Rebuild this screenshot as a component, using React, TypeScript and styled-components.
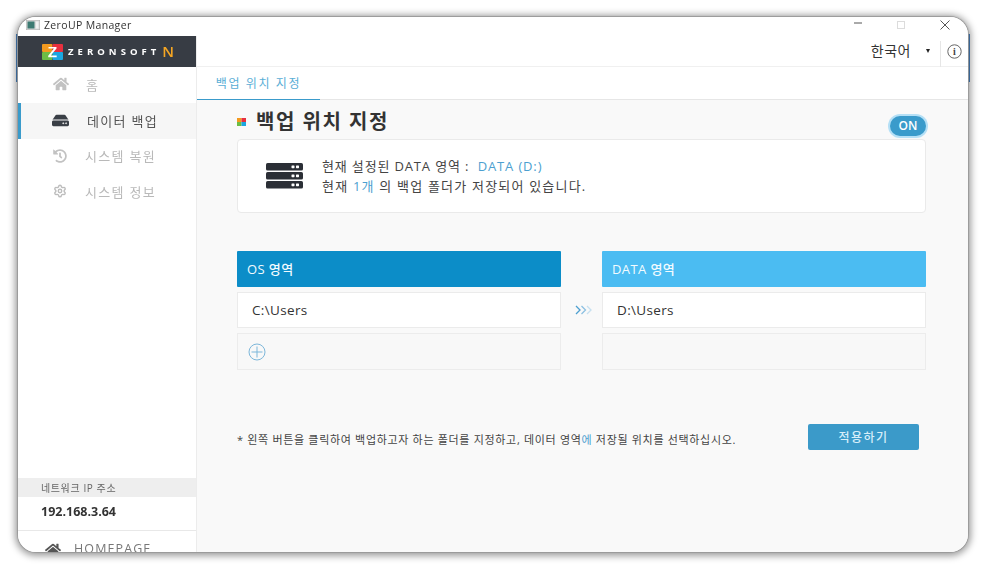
import React from "react";
import styled, { createGlobalStyle } from "styled-components";
import { FaHome, FaHdd, FaHistory } from "react-icons/fa";
import { Settings } from "lucide-react";

const FONT = `"Open Sans", "Noto Sans CJK KR", sans-serif`;

const Global = createGlobalStyle`
  html, body { margin: 0; padding: 0; background: #fff; }
  body { width: 986px; height: 568px; overflow: hidden; font-family: ${FONT}; }
  * { box-sizing: border-box; }
`;

const Page = styled.div`
  position: relative;
  width: 986px;
  height: 568px;
  padding: 17px 18px 16px 18px;
`;

const EdgeStripe = styled.div<{ $side: "left" | "right" }>`
  position: absolute;
  top: 34px;
  ${(p) => p.$side}: 16px;
  width: 2px;
  height: 48px;
  background: #3f7fc4;
`;

const Window = styled.div`
  position: relative;
  width: 950px;
  height: 535px;
  background: #fff;
  border-radius: 18px;
  overflow: hidden;
  display: flex;
  flex-direction: column;
  box-shadow: 0 0 1px 1px #9a9a9a, 0 1px 7px 3px rgba(0, 0, 0, 0.38);
  filter: blur(0.3px);
`;

const TitleBar = styled.div`
  height: 19px;
  flex: none;
  display: flex;
  align-items: center;
  background: #fff;
  padding: 0 0 3px 8px;
`;

const AppTitle = styled.span`
  margin-left: 4px;
  font-size: 10.5px;
  letter-spacing: 0.35px;
  color: #333;
`;

const WinButtons = styled.div`
  margin-left: auto;
  display: flex;
  align-items: center;
  padding-right: 18px;
  gap: 35px;
`;

const Body = styled.div`
  flex: 1;
  display: flex;
  min-height: 0;
`;

const Sidebar = styled.aside`
  width: 179px;
  flex: none;
  display: flex;
  flex-direction: column;
  background: #fff;
  border-right: 1px solid #ececec;
`;

const Brand = styled.div`
  height: 31px;
  flex: none;
  background: #373c44;
  display: flex;
  align-items: center;
  padding-left: 24px;
`;

const BrandName = styled.span`
  margin-left: 5px;
  color: #fff;
  font-family: "Open Sans", sans-serif;
  font-size: 9.5px;
  font-weight: 700;
  letter-spacing: 4.05px;
`;

const BrandN = styled.span`
  margin-left: 2px;
  color: #f5a623;
  font-family: "Open Sans", sans-serif;
  font-size: 15px;
  font-weight: 600;
  line-height: 15px;
`;

const Menu = styled.nav`
  display: flex;
  flex-direction: column;
`;

const MenuItem = styled.div<{ $active?: boolean; $h?: number }>`
  height: ${(p) => p.$h ?? 36}px;
  display: flex;
  align-items: center;
  padding: 0 0 2px ${(p) => (p.$active ? 31 : 32)}px;
  background: ${(p) => (p.$active ? "#f6f6f6" : "#fff")};
  border-left: 3px solid ${(p) => (p.$active ? "#3a9bcb" : "transparent")};
  color: ${(p) => (p.$active ? "#555" : "#b9b9b9")};
  font-size: 13px;
  letter-spacing: 1.3px;
  svg { flex: none; }
`;

const MenuIcon = styled.span<{ $w: number }>`
  width: ${(p) => p.$w}px;
  flex: none;
  display: flex;
  align-items: center;
`;

const Spacer = styled.div`
  flex: 1;
`;

const IpLabel = styled.div`
  height: 19px;
  background: #eeeeee;
  color: #666;
  font-size: 10px;
  letter-spacing: 0.6px;
  line-height: 20px;
  padding-left: 23px;
`;

const IpValue = styled.div`
  height: 34px;
  border-bottom: 1px solid #e8e8e8;
  color: #333;
  font-size: 12.5px;
  font-weight: 700;
  padding: 6px 0 0 23px;
`;

const HomeLink = styled.div`
  height: 21px;
  flex: none;
  display: flex;
  align-items: flex-start;
  padding: 10px 0 0 27px;
  color: #777;
  font-size: 12.5px;
  letter-spacing: 1.1px;
  white-space: nowrap;
  overflow: hidden;
`;

const HomeLabel = styled.span`
  margin-left: 13px;
  line-height: 16px;
`;

const Main = styled.main`
  flex: 1;
  min-width: 0;
  display: flex;
  flex-direction: column;
  background: #f9f9f9;
`;

const TopBar = styled.header`
  height: 31px;
  flex: none;
  background: #fff;
  border-bottom: 1px solid #f0f0f0;
  display: flex;
  align-items: center;
  justify-content: flex-end;
`;

const Lang = styled.span`
  font-size: 14px;
  letter-spacing: 0.5px;
  color: #333;
  margin-top: -2px;
`;

const Caret = styled.span`
  margin-left: 15px;
  margin-right: 10px;
  width: 0;
  height: 0;
  border-left: 2.5px solid transparent;
  border-right: 2.5px solid transparent;
  border-top: 4px solid #222;
`;

const InfoWrap = styled.div`
  height: 26px;
  margin-top: 5px;
  width: 28px;
  border-left: 1px solid #e6e6e6;
  display: flex;
  align-items: center;
  justify-content: center;
  padding-bottom: 4px;
`;

const Tabs = styled.div`
  height: 33px;
  flex: none;
  background: #fff;
  border-bottom: 1px solid #e6e6e6;
  display: flex;
`;

const Tab = styled.div`
  width: 123px;
  height: 33px;
  border-bottom: 1px solid #3a9bcb;
  color: #5aaed6;
  font-size: 12px;
  letter-spacing: 1.6px;
  line-height: 33px;
  text-align: center;
`;

const Content = styled.section`
  flex: 1;
  display: flex;
  flex-direction: column;
  padding: 8px 42px 0 40px;
`;

const HeadRow = styled.div`
  height: 31px;
  display: flex;
  align-items: center;
`;

const Title = styled.h1`
  margin: 0 0 6px 10px;
  font-size: 20px;
  font-weight: 700;
  letter-spacing: 1.5px;
  color: #333;
`;

const Toggle = styled.div`
  margin-left: auto;
  margin-top: 4px;
  width: 36px;
  height: 20px;
  border-radius: 10px;
  background: #3a9bcb;
  box-shadow: 0 0 0 2px #b5e0f6;
  color: #fff;
  font-size: 12px;
  font-weight: 600;
  text-align: center;
  line-height: 20px;
`;

const InfoCard = styled.div`
  height: 74px;
  background: #fff;
  border: 1px solid #eaeaea;
  border-radius: 4px;
  display: flex;
  align-items: center;
  padding-left: 28px;
`;

const InfoLines = styled.div`
  margin-left: 19px;
  display: flex;
  flex-direction: column;
  gap: 2px;
  font-size: 13px;
  letter-spacing: 1.2px;
  color: #444;
  line-height: 18px;
  margin-top: -1px;
`;

const InfoLine = styled.div<{ $tight?: boolean }>`
  letter-spacing: ${(p) => (p.$tight ? 0.85 : 1.2)}px;
`;

const Accent = styled.span`
  color: #4d9fd0;
`;

const Columns = styled.div`
  margin-top: 38px;
  display: grid;
  grid-template-columns: 324px 41px 324px;
`;

const Column = styled.div`
  display: flex;
  flex-direction: column;
  gap: 5px;
`;

const ColHead = styled.div<{ $light?: boolean }>`
  height: 36px;
  background: ${(p) => (p.$light ? "#4bbcf2" : "#0c8dc8")};
  color: #f2fbff;
  font-size: 13px;
  letter-spacing: 0.4px;
  font-weight: 500;
  padding-left: 10px;
  line-height: 36px;
  border-radius: 1px;
`;

const PathRow = styled.div`
  height: 36px;
  background: #fff;
  border: 1px solid #ebebeb;
  font-size: 13.5px;
  letter-spacing: 0.35px;
  color: #333;
  padding-left: 14px;
  line-height: 35px;
`;

const AddRow = styled.div`
  height: 37px;
  background: #f8f8f8;
  border: 1px solid #ececec;
  display: flex;
  align-items: center;
  padding-left: 10px;
`;

const ArrowCell = styled.div`
  display: flex;
  align-items: center;
  justify-content: center;
  height: 36px;
  margin-top: 41px;
  padding-left: 5px;
`;

const Footer = styled.div`
  margin-top: 54px;
  display: flex;
  align-items: center;
  height: 26px;
`;

const Note = styled.p`
  margin: 3px 0 0;
  font-size: 11px;
  letter-spacing: 0.68px;
  color: #444;
`;

const Apply = styled.button`
  margin-left: auto;
  margin-right: 7px;
  width: 111px;
  height: 26px;
  border: none;
  border-radius: 2px;
  background: #3b9ac9;
  color: #d8eef9;
  font-family: ${FONT};
  font-size: 12px;
  font-weight: 500;
  letter-spacing: 1.5px;
`;

const AppIcon = () => (
  <svg width="14" height="10" viewBox="0 0 14 10">
    <rect x="0" y="0" width="14" height="10" fill="#d9d9d9" stroke="#9a9a9a" strokeWidth="0.6" />
    <rect x="1.5" y="1.5" width="7" height="7" fill="#3d7a72" />
    <rect x="10" y="1.5" width="2.5" height="7" fill="#f2f2f2" />
  </svg>
);

const Logo = () => (
  <svg width="21" height="16" viewBox="0 0 21 16" style={{ flex: "none" }}>
    <rect x="0" y="0" width="10.5" height="8" rx="1" fill="#f39a1f" />
    <rect x="10.5" y="0" width="10.5" height="8" rx="1" fill="#e8303f" />
    <rect x="0" y="8" width="10.5" height="8" rx="1" fill="#6cbd45" />
    <rect x="10.5" y="8" width="10.5" height="8" rx="1" fill="#1ba6e0" />
    <path d="M6.5 3 H14.5 V4.4 L8.8 11.6 H14.7 V13.2 H6.2 V11.8 L11.9 4.6 H6.5 Z" fill="#fff" />
  </svg>
);

const Swatch = () => (
  <svg width="9" height="8" viewBox="0 0 9 8" style={{ flex: "none", marginBottom: 4 }}>
    <rect width="4.5" height="4" fill="#f39a1f" />
    <rect x="4.5" width="4.5" height="4" fill="#e8303f" />
    <rect y="4" width="4.5" height="4" fill="#6cbd45" />
    <rect x="4.5" y="4" width="4.5" height="4" fill="#1ba6e0" />
  </svg>
);

const Chevrons = () => (
  <svg width="18" height="10" viewBox="0 0 18 10" fill="none" strokeWidth="1.3">
    <path d="M1 1 L5 5 L1 9" stroke="#4d9fd0" />
    <path d="M6.5 1 L10.5 5 L6.5 9" stroke="#8cc1e2" />
    <path d="M12 1 L16 5 L12 9" stroke="#c6e0f0" />
  </svg>
);

const ServerIcon = () => (
  <svg width="37" height="26" viewBox="0 0 37 26" style={{ flex: "none" }}>
    {[0, 9, 18].map((y) => (
      <g key={y}>
        <rect x="0" y={y} width="37" height="7.6" rx="1.6" fill="#2b2f36" />
        <rect x="25.5" y={y + 2.4} width="3" height="2.8" rx="0.6" fill="#fff" />
        <rect x="30" y={y + 2.4} width="3" height="2.8" rx="0.6" fill="#fff" />
      </g>
    ))}
  </svg>
);

export default function App() {
  return (
    <>
      <Global />
      <Page>
        <EdgeStripe $side="left" />
        <EdgeStripe $side="right" />
        <Window>
          <TitleBar>
            <AppIcon />
            <AppTitle>ZeroUP Manager</AppTitle>
            <WinButtons>
              <svg width="8" height="2" viewBox="0 0 8 2" style={{ marginBottom: 4 }}><path d="M0 1 H8" stroke="#555" /></svg>
              <svg width="8" height="8" viewBox="0 0 8 8"><rect x="0.5" y="0.5" width="7" height="7" fill="none" stroke="#dcdcdc" /></svg>
              <svg width="10" height="10" viewBox="0 0 10 10"><path d="M0.5 0.5 L9.5 9.5 M9.5 0.5 L0.5 9.5" stroke="#555" /></svg>
            </WinButtons>
          </TitleBar>
          <Body>
            <Sidebar>
              <Brand>
                <Logo />
                <BrandName>ZERONSOFT</BrandName>
                <BrandN>N</BrandN>
              </Brand>
              <Menu>
                <MenuItem>
                  <MenuIcon $w={33}><FaHome size={16} color="#c2c2c2" /></MenuIcon>
                  홈
                </MenuItem>
                <MenuItem $active>
                  <MenuIcon $w={35}><FaHdd size={17} color="#3a3f46" /></MenuIcon>
                  데이터 백업
                </MenuItem>
                <MenuItem $h={35}>
                  <MenuIcon $w={32}><FaHistory size={14} color="#c2c2c2" /></MenuIcon>
                  시스템 복원
                </MenuItem>
                <MenuItem>
                  <MenuIcon $w={32}><Settings size={14} color="#bdbdbd" strokeWidth={2.4} /></MenuIcon>
                  시스템 정보
                </MenuItem>
              </Menu>
              <Spacer />
              <IpLabel>네트워크 IP 주소</IpLabel>
              <IpValue>192.168.3.64</IpValue>
              <HomeLink>
                <FaHome size={16} color="#555" style={{ flex: "none", marginTop: 1 }} />
                <HomeLabel>HOMEPAGE</HomeLabel>
              </HomeLink>
            </Sidebar>
            <Main>
              <TopBar>
                <Lang>한국어</Lang>
                <Caret />
                <InfoWrap>
                  <svg width="15" height="15" viewBox="0 0 15 15" fill="none">
                    <circle cx="7.5" cy="7.5" r="6.7" stroke="#666" />
                    <text x="7.5" y="11" textAnchor="middle" fontSize="10" fontWeight="700" fontFamily="Liberation Serif, serif" fill="#444">i</text>
                  </svg>
                </InfoWrap>
              </TopBar>
              <Tabs>
                <Tab>백업 위치 지정</Tab>
              </Tabs>
              <Content>
                <HeadRow>
                  <Swatch />
                  <Title>백업 위치 지정</Title>
                  <Toggle>ON</Toggle>
                </HeadRow>
                <InfoCard>
                  <ServerIcon />
                  <InfoLines>
                    <InfoLine $tight>현재 설정된 DATA 영역 : &nbsp;<Accent>DATA (D:)</Accent></InfoLine>
                    <InfoLine>현재 <Accent>1개</Accent> 의 백업 폴더가 저장되어 있습니다.</InfoLine>
                  </InfoLines>
                </InfoCard>
                <Columns>
                  <Column>
                    <ColHead>OS 영역</ColHead>
                    <PathRow>C:\Users</PathRow>
                    <AddRow>
                      <svg width="18" height="18" viewBox="0 0 18 18" fill="none">
                        <circle cx="9" cy="9" r="8" stroke="#7db7da" />
                        <path d="M3.5 9 H14.5 M9 3.5 V14.5" stroke="#7db7da" />
                      </svg>
                    </AddRow>
                  </Column>
                  <ArrowCell><Chevrons /></ArrowCell>
                  <Column>
                    <ColHead $light>DATA 영역</ColHead>
                    <PathRow>D:\Users</PathRow>
                    <AddRow />
                  </Column>
                </Columns>
                <Footer>
                  <Note>
                    * 왼쪽 버튼을 클릭하여 백업하고자 하는 폴더를 지정하고, 데이터 영역<Accent>에</Accent> 저장될 위치를 선택하십시오.
                  </Note>
                  <Apply>적용하기</Apply>
                </Footer>
              </Content>
            </Main>
          </Body>
        </Window>
      </Page>
    </>
  );
}
